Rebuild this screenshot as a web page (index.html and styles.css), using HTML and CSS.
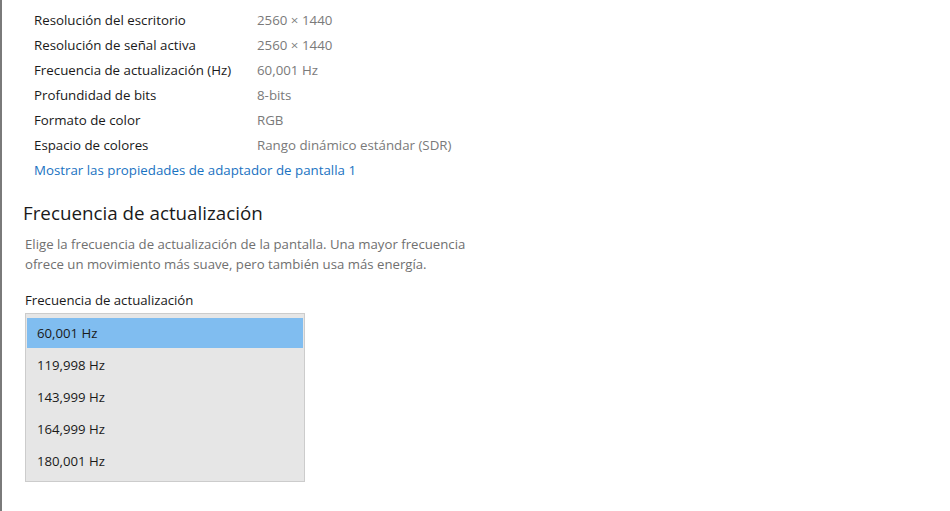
FILE: index.html
```html
<!DOCTYPE html>
<html lang="es">
<head>
<meta charset="utf-8">
<link rel="stylesheet" href="styles.css">
</head>
<body>
<div class="page">
  <div class="props">
    <div class="row"><span class="key">Resolución del escritorio</span><span class="val">2560 × 1440</span></div>
    <div class="row"><span class="key">Resolución de señal activa</span><span class="val">2560 × 1440</span></div>
    <div class="row"><span class="key">Frecuencia de actualización (Hz)</span><span class="val">60,001 Hz</span></div>
    <div class="row"><span class="key">Profundidad de bits</span><span class="val">8-bits</span></div>
    <div class="row"><span class="key">Formato de color</span><span class="val">RGB</span></div>
    <div class="row"><span class="key">Espacio de colores</span><span class="val">Rango dinámico estándar (SDR)</span></div>
    <div class="row"><a class="link" href="#">Mostrar las propiedades de adaptador de pantalla 1</a></div>
  </div>
  <h2 class="title">Frecuencia de actualización</h2>
  <p class="desc">Elige la frecuencia de actualización de la pantalla. Una mayor frecuencia<br>ofrece un movimiento más suave, pero también usa más energía.</p>
  <div class="label">Frecuencia de actualización</div>
  <div class="list">
    <div class="item selected">60,001 Hz</div>
    <div class="item">119,998 Hz</div>
    <div class="item">143,999 Hz</div>
    <div class="item">164,999 Hz</div>
    <div class="item">180,001 Hz</div>
  </div>
</div>
</body>
</html>
```
FILE: styles.css
```css
html, body {
  margin: 0;
  padding: 0;
  background: #fff;
}
body {
  font-family: "Open Sans", "Noto Sans", sans-serif;
  color: #1a1a1a;
  width: 950px;
  height: 511px;
  overflow: hidden;
}
.page {
  border-left: 2px solid #7a7a7a;
  height: 511px;
  box-sizing: border-box;
  padding: 7px 0 0 23px;
}
.props {
  padding-left: 9px;
}
.row {
  display: flex;
  height: 25px;
  align-items: center;
  font-size: 13.3px;
}
.key {
  width: 223px;
  color: #1a1a1a;
}
.val {
  color: #7a7a7a;
}
.link {
  color: #1a73c2;
  text-decoration: none;
}
.title {
  margin: 18px 0 0 -2px;
  font-size: 18.8px;
  font-weight: 400;
  line-height: 26px;
  color: #1a1a1a;
}
.desc {
  margin: 8px 0 0 0;
  font-size: 13.2px;
  line-height: 20px;
  color: #707070;
}
.label {
  margin-top: 17px;
  font-size: 13.2px;
  line-height: 18px;
  color: #1a1a1a;
}
.list {
  margin-top: 4px;
  width: 280px;
  height: 169px;
  box-sizing: border-box;
  border: 1px solid #cccccc;
  background: #e6e6e6;
  padding: 4px 1px;
}
.item {
  height: 32px;
  line-height: 30px;
  padding-left: 10px;
  font-size: 13.2px;
  color: #1a1a1a;
}
.item.selected {
  height: 30px;
  margin-bottom: 2px;
  background: #80bdf0;
}
```
